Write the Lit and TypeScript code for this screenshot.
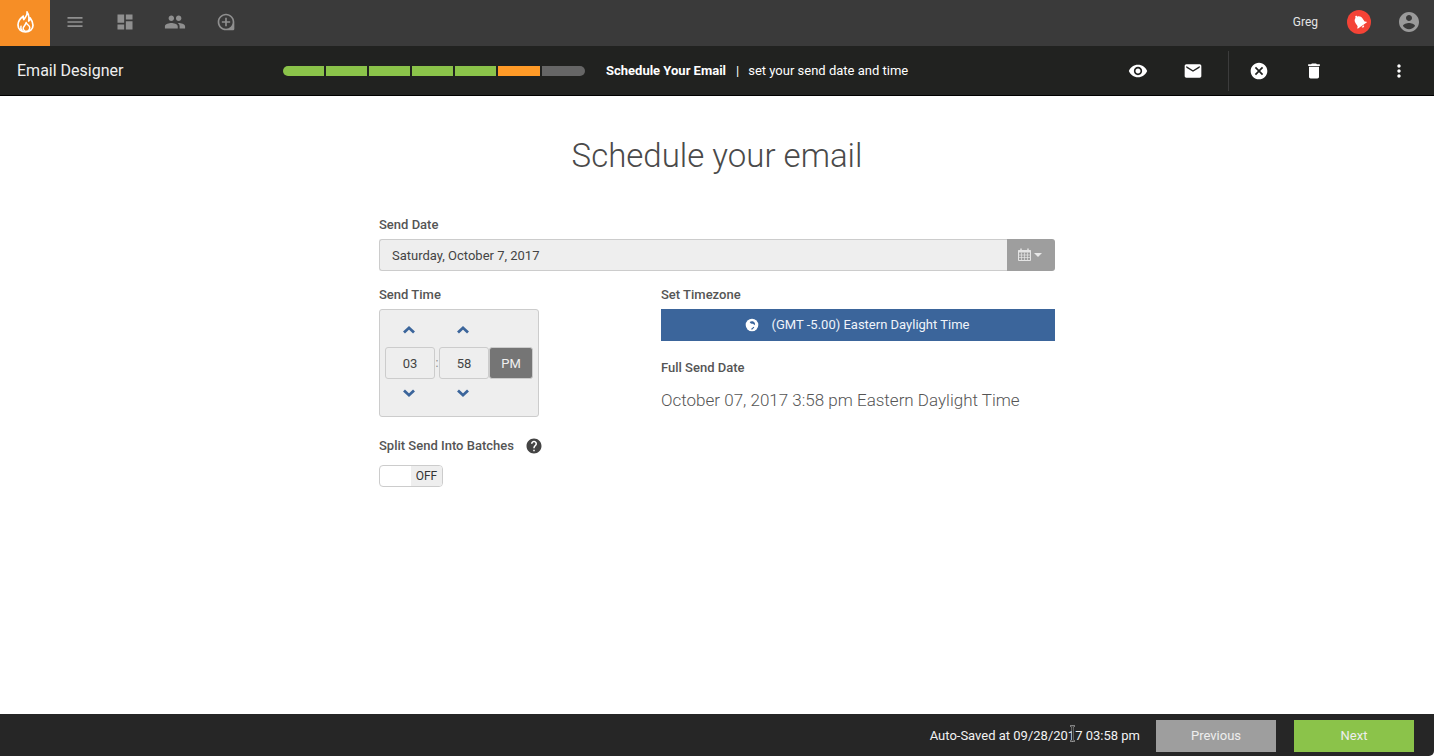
import { LitElement, html, css } from "lit";
import { customElement } from "lit/decorators.js";

const P = {
  menu: "M3 18h18v-2H3v2zm0-5h18v-2H3v2zm0-7v2h18V6H3z",
  dash: "M3 13h8V3H3v10zm0 8h8v-6H3v6zm10 0h8V11h-8v10zm0-18v6h8V3h-8z",
  people: "M16 11c1.66 0 2.99-1.34 2.99-3S17.66 5 16 5c-1.66 0-3 1.34-3 3s1.34 3 3 3zm-8 0c1.66 0 2.99-1.34 2.99-3S9.66 5 8 5C6.34 5 5 6.34 5 8s1.34 3 3 3zm0 2c-2.33 0-7 1.17-7 3.5V19h14v-2.5c0-2.33-4.67-3.5-7-3.5zm8 0c-.29 0-.62.02-.97.05 1.16.84 1.97 1.97 1.97 3.45V19h6v-2.5c0-2.33-4.67-3.5-7-3.5z",
  add: "M13 7h-2v4H7v2h4v4h2v-4h4v-2h-4V7zm-1-5C6.48 2 2 6.48 2 12s4.48 10 10 10h8c1.1 0 2-.9 2-2v-8c0-5.52-4.48-10-10-10zm0 18c-4.41 0-8-3.59-8-8s3.59-8 8-8 8 3.59 8 8-3.59 8-8 8z",
  eye: "M12 4.5C7 4.5 2.73 7.61 1 12c1.73 4.39 6 7.5 11 7.5s9.27-3.11 11-7.5c-1.73-4.39-6-7.5-11-7.5zM12 17c-2.76 0-5-2.24-5-5s2.24-5 5-5 5 2.24 5 5-2.24 5-5 5zm0-8c-1.66 0-3 1.34-3 3s1.34 3 3 3 3-1.34 3-3-1.34-3-3-3z",
  mail: "M20 4H4c-1.1 0-1.99.9-1.99 2L2 18c0 1.1.9 2 2 2h16c1.1 0 2-.9 2-2V6c0-1.1-.9-2-2-2zm0 4l-8 5-8-5V6l8 5 8-5v2z",
  cancel: "M12 2C6.47 2 2 6.47 2 12s4.47 10 10 10 10-4.47 10-10S17.53 2 12 2zm5 13.59L15.59 17 12 13.41 8.41 17 7 15.59 10.59 12 7 8.41 8.41 7 12 10.59 15.59 7 17 8.41 13.41 12 17 15.59z",
  trash: "M6 19c0 1.1.9 2 2 2h8c1.1 0 2-.9 2-2V7H6v12zM19 4h-3.5l-1-1h-5l-1 1H5v2h14V4z",
  more: "M12 8c1.1 0 2-.9 2-2s-.9-2-2-2-2 .9-2 2 .9 2 2 2zm0 2c-1.1 0-2 .9-2 2s.9 2 2 2 2-.9 2-2-.9-2-2-2zm0 6c-1.1 0-2 .9-2 2s.9 2 2 2 2-.9 2-2-.9-2-2-2z",
  account: "M12 2C6.48 2 2 6.48 2 12s4.48 10 10 10 10-4.48 10-10S17.52 2 12 2zm0 3c1.66 0 3 1.34 3 3s-1.34 3-3 3-3-1.34-3-3 1.34-3 3-3zm0 14.2c-2.5 0-4.71-1.28-6-3.22.03-1.99 4-3.08 6-3.08 1.99 0 5.97 1.09 6 3.08-1.29 1.94-3.5 3.22-6 3.22z",
  bell: "M12 22c1.1 0 2-.9 2-2h-4c0 1.1.9 2 2 2zm6-6v-5c0-3.07-1.63-5.64-4.5-6.32V4c0-.83-.67-1.5-1.5-1.5s-1.5.67-1.5 1.5v.68C7.64 5.36 6 7.92 6 11v5l-2 2v1h16v-1l-2-2z",
  help: "M12 2C6.48 2 2 6.48 2 12s4.48 10 10 10 10-4.48 10-10S17.52 2 12 2zm1 17h-2v-2h2v2zm2.07-7.75l-.9.92C13.45 12.9 13 13.5 13 15h-2v-.5c0-1.1.45-2.1 1.17-2.83l1.24-1.26c.37-.36.59-.86.59-1.41 0-1.1-.9-2-2-2s-2 .9-2 2H8c0-2.21 1.79-4 4-4s4 1.79 4 4c0 .88-.36 1.68-.93 2.25z",
};

const icon = (d: string, size: number, cls = "") => html`<svg class=${cls} width=${size} height=${size} viewBox="0 0 24 24" fill="currentColor"><path d=${d}></path></svg>`;

const up = html`<svg class="chev" width="14" height="10" viewBox="0 0 14 10"><path d="M2 7.5 7 2.8l5 4.7" fill="none" stroke="currentColor" stroke-width="2.8"></path></svg>`;
const down = html`<svg class="chev dn" width="14" height="10" viewBox="0 0 14 10"><path d="M2 2.5 7 7.2l5-4.7" fill="none" stroke="currentColor" stroke-width="2.8"></path></svg>`;

const flame = html`<svg width="17" height="22" viewBox="0 0 17 22" fill="none" stroke="#fff" stroke-linejoin="round" stroke-linecap="round"><path stroke-width="1.700" d="M10 1c1 3.500-2 5.300-3.200 7.500C6.200 7.400 6 6.400 6.200 5.200 3.200 7.500 1 10.500 1 14c0 4.300 3.300 7 7.500 7s7.500-2.700 7.500-6.800c0-3.300-1.500-5.400-2.800-7.200-.2 1.500-.7 2.400-1.500 3C12.300 6.500 12 3.300 10 1z"></path><path stroke-width="1.500" d="M5 19.500C3.800 18.300 3.500 16.800 4 15.300M9.200 11.500c.2 2 3.600 2.800 3.600 5.300 0 1.400-.8 2.500-2 3.100-1 .4-2.300.4-3.200 0-1.100-.6-1.600-1.700-1.400-2.900.3-1.800 2.500-3 3-5.500z"></path></svg>`;

const globe = html`<svg width="14" height="14" viewBox="0 0 14 14"><circle cx="7" cy="7" r="6.300" fill="#fff"></circle><path fill="#3b659b" d="M4.700 4c1.500-1.100 3.700-.9 4.800.5.700 1 .6 2.100-.2 2.700-.6-1.100-1.600-1.600-2.700-1.400C5.900 5.700 5.200 5 4.700 4zM6 11.100l2.600-2.300.7.8L7 11.700z"></path></svg>`;

const calendar = html`<svg width="13" height="13" viewBox="0 0 13 13"><path d="M.5 2.500h12v10H.5z" fill="none" stroke="#e4e4e4"></path><path d="M.5 2h12v2.500H.5z" fill="#e4e4e4"></path><path d="M3 .5v2.500M10 .5v2.500" stroke="#e4e4e4" stroke-width="1.500"></path><path d="M3.500 4.500v8M6.500 4.500v8M9.500 4.500v8M.5 7h12M.5 9.500h12" stroke="#e4e4e4" stroke-width=".7"></path></svg>`;

const SEGS: [string, number][] = [
  ["#8bc34a", 41], ["#8bc34a", 41], ["#8bc34a", 41], ["#8bc34a", 41], ["#8bc34a", 41], ["#ff9a27", 42], ["#666", 43],
];

@customElement("app-root")
export class AppRoot extends LitElement {
  static styles = css`
    :host { display: flex; flex-direction: column; width: 1434px; height: 756px; overflow: hidden; position: relative; background: #fff; font-family: Roboto, "Liberation Sans", sans-serif; color: #444; }
    * { box-sizing: border-box; }
    .top { height: 46px; flex: none; display: flex; align-items: center; background: #3a3a3a; }
    .logo { width: 50px; height: 46px; padding-bottom: 3px; background: #f68e26; display: flex; align-items: center; justify-content: center; }
    .nav { width: 50px; height: 46px; padding-bottom: 3px; display: flex; align-items: center; justify-content: center; color: #8f8f8f; }
    .nav.add { padding-left: 2px; }
    .spacer { flex: 1; }
    .user { font-size: 12px; color: #e4e4e4; margin-right: 29px; padding-bottom: 3px; }
    .bell { width: 24px; height: 24px; margin-bottom: 3px; border-radius: 50%; background: #f44336; color: #fff; display: flex; align-items: center; justify-content: center; margin-right: 26px; }
    .bell svg { transform: rotate(-35deg); }
    .account { color: #9a9a9a; margin-right: 13px; margin-bottom: 3px; display: flex; }
    .sub { height: 50px; flex: none; display: flex; align-items: center; background: #212220; border-bottom: 1px solid #000; color: #fff; }
    .app { font-size: 16px; color: #efefef; width: 283px; padding-left: 17px; flex: none; }
    .prog { display: flex; gap: 2px; width: 302px; height: 10px; border-radius: 5px; overflow: hidden; flex: none; }
    .seg { height: 10px; }
    .step { margin-left: 21px; font-size: 13px; color: #fff; display: flex; align-items: center; }
    .step b { font-weight: 700; }
    .step i { font-style: normal; margin: 0 9px 0 10px; }
    .actions { margin-left: auto; display: flex; align-items: center; height: 100%; }
    .act { width: 55px; height: 46px; display: flex; align-items: center; justify-content: center; color: #fff; }
    .rule { width: 1px; height: 40px; background: #3c3c3c; margin: 0 2px 0 8px; }
    .act.last { margin-left: 30px; margin-right: 8px; }
    main { flex: 1; padding-top: 40px; display: flex; flex-direction: column; align-items: center; }
    h1 { margin: 0 0 40px; font-size: 33px; line-height: 40px; font-weight: 300; color: #4a4a4a; }
    .form { width: 676px; }
    .lbl { font-size: 13px; line-height: 16px; font-weight: 500; color: #555; padding-top: 1px; height: 16px; }
    .date { margin-top: 7px; height: 32px; display: flex; }
    .date .val { flex: 1; background: #eee; border: 1px solid #ccc; border-right: none; border-radius: 3px 0 0 3px; padding-left: 12px; font-size: 13px; line-height: 32px; color: #444; }
    .date .btn { width: 48px; padding: 0 2px 1px 0; background: #9e9e9e; border-radius: 0 3px 3px 0; display: flex; align-items: center; justify-content: center; gap: 3px; }
    .caret { width: 0; height: 0; border-left: 4px solid transparent; border-right: 4px solid transparent; border-top: 4px solid #e8e8e8; }
    .cols { display: flex; justify-content: space-between; margin-top: 15px; }
    .left { width: 170px; }
    .right { width: 394px; }
    .picker { margin-top: 7px; width: 160px; height: 108px; background: #eee; border: 1px solid #ccc; border-radius: 3px; padding: 0 5px; display: grid; grid-template-columns: 50px 4px 50px 44px; grid-template-rows: 37px 32px 37px; align-items: center; justify-items: center; }
    .chev { color: #3b659b; display: block; margin: 3px 2px 0 0; }
    .chev.dn { margin: 0 2px 10px 0; }
    .num { width: 50px; height: 32px; border: 1px solid #ccc; border-radius: 3px; font-size: 13px; display: flex; align-items: center; justify-content: center; color: #444; }
    .colon { font-size: 12px; color: #888; }
    .pm { width: 44px; height: 32px; background: #757575; border: 1px solid #ccc; border-radius: 3px; color: #f0f0f0; font-size: 13px; display: flex; align-items: center; justify-content: center; }
    .split { margin-top: 20px; display: flex; align-items: center; gap: 11px; }
    .split svg { color: #444; flex: none; }
    .toggle { margin-top: 12px; width: 64px; height: 22px; border: 1px solid #ccc; border-radius: 4px; display: flex; justify-content: flex-end; overflow: hidden; }
    .toggle span { width: 31px; background: #eee; font-size: 12px; line-height: 20px; text-align: center; color: #333; }
    .tz { margin-top: 7px; height: 32px; padding: 0 2px 1px 0; background: #3b659b; display: flex; align-items: center; justify-content: center; font-size: 13px; gap: 13px; color: #f0f4fa; }
    .lbl.full { margin-top: 18px; }
    .fulltxt { margin-top: 13px; font-size: 17px; line-height: 24px; font-weight: 300; color: #555; }
    footer { height: 42px; flex: none; background: #262626; border-bottom-right-radius: 5px; display: flex; align-items: center; justify-content: flex-end; padding-right: 20px; }
    .saved { font-size: 13px; color: #f2f2f2; margin-right: 16px; }
    .fbtn { width: 120px; height: 32px; display: flex; align-items: center; justify-content: center; font-size: 13px; color: #eee; background: #9e9e9e; margin-top: 1px; }
    .fbtn.next { background: #8bc34a; margin-left: 18px; }
    .cursor { position: absolute; left: 1068px; top: 725px; }
  `;

  render() {
    return html`
      <div class="top">
        <div class="logo">${flame}</div>
        <div class="nav">${icon(P.menu, 20)}</div>
        <div class="nav">${icon(P.dash, 20)}</div>
        <div class="nav">${icon(P.people, 22)}</div>
        <div class="nav add">${icon(P.add, 20)}</div>
        <div class="spacer"></div>
        <div class="user">Greg</div>
        <div class="bell">${icon(P.bell, 17)}</div>
        <div class="account">${icon(P.account, 24)}</div>
      </div>
      <div class="sub">
        <div class="app">Email Designer</div>
        <div class="prog">${SEGS.map(([c, w]) => html`<div class="seg" style="background:${c};width:${w}px"></div>`)}</div>
        <div class="step"><b>Schedule Your Email</b><i>|</i>set your send date and time</div>
        <div class="actions">
          <div class="act">${icon(P.eye, 20)}</div>
          <div class="act">${icon(P.mail, 20)}</div>
          <div class="rule"></div>
          <div class="act">${icon(P.cancel, 20)}</div>
          <div class="act">${icon(P.trash, 20)}</div>
          <div class="act last">${icon(P.more, 20)}</div>
        </div>
      </div>
      <main>
        <h1>Schedule your email</h1>
        <div class="form">
          <div class="lbl">Send Date</div>
          <div class="date"><div class="val">Saturday, October 7, 2017</div><div class="btn">${calendar}<span class="caret"></span></div></div>
          <div class="cols">
            <div class="left">
              <div class="lbl">Send Time</div>
              <div class="picker">
                ${up}<span></span>${up}<span></span>
                <div class="num">03</div><span class="colon">:</span><div class="num">58</div><div class="pm">PM</div>
                ${down}<span></span>${down}<span></span>
              </div>
              <div class="lbl split">Split Send Into Batches ${icon(P.help, 18)}</div>
              <div class="toggle"><span>OFF</span></div>
            </div>
            <div class="right">
              <div class="lbl">Set Timezone</div>
              <div class="tz">${globe}<span>(GMT -5.00) Eastern Daylight Time</span></div>
              <div class="lbl full">Full Send Date</div>
              <div class="fulltxt">October 07, 2017 3:58 pm Eastern Daylight Time</div>
            </div>
          </div>
        </div>
      </main>
      <footer>
        <div class="saved">Auto-Saved at 09/28/2017 03:58 pm</div>
        <div class="fbtn">Previous</div>
        <div class="fbtn next">Next</div>
      </footer>
      <svg class="cursor" width="9" height="17" viewBox="0 0 9 17" fill="none"><path d="M2 1h1.500l1 1 1-1H7M4.500 2v13M2 16h1.500l1-1 1 1H7" stroke="#9a9a9a" stroke-width="2"></path><path d="M2.500 1h1l1 1 1-1h1M4.500 2v13M2.500 16h1l1-1 1 1h1" stroke="#111" stroke-width=".8"></path></svg>
    `;
  }
}
